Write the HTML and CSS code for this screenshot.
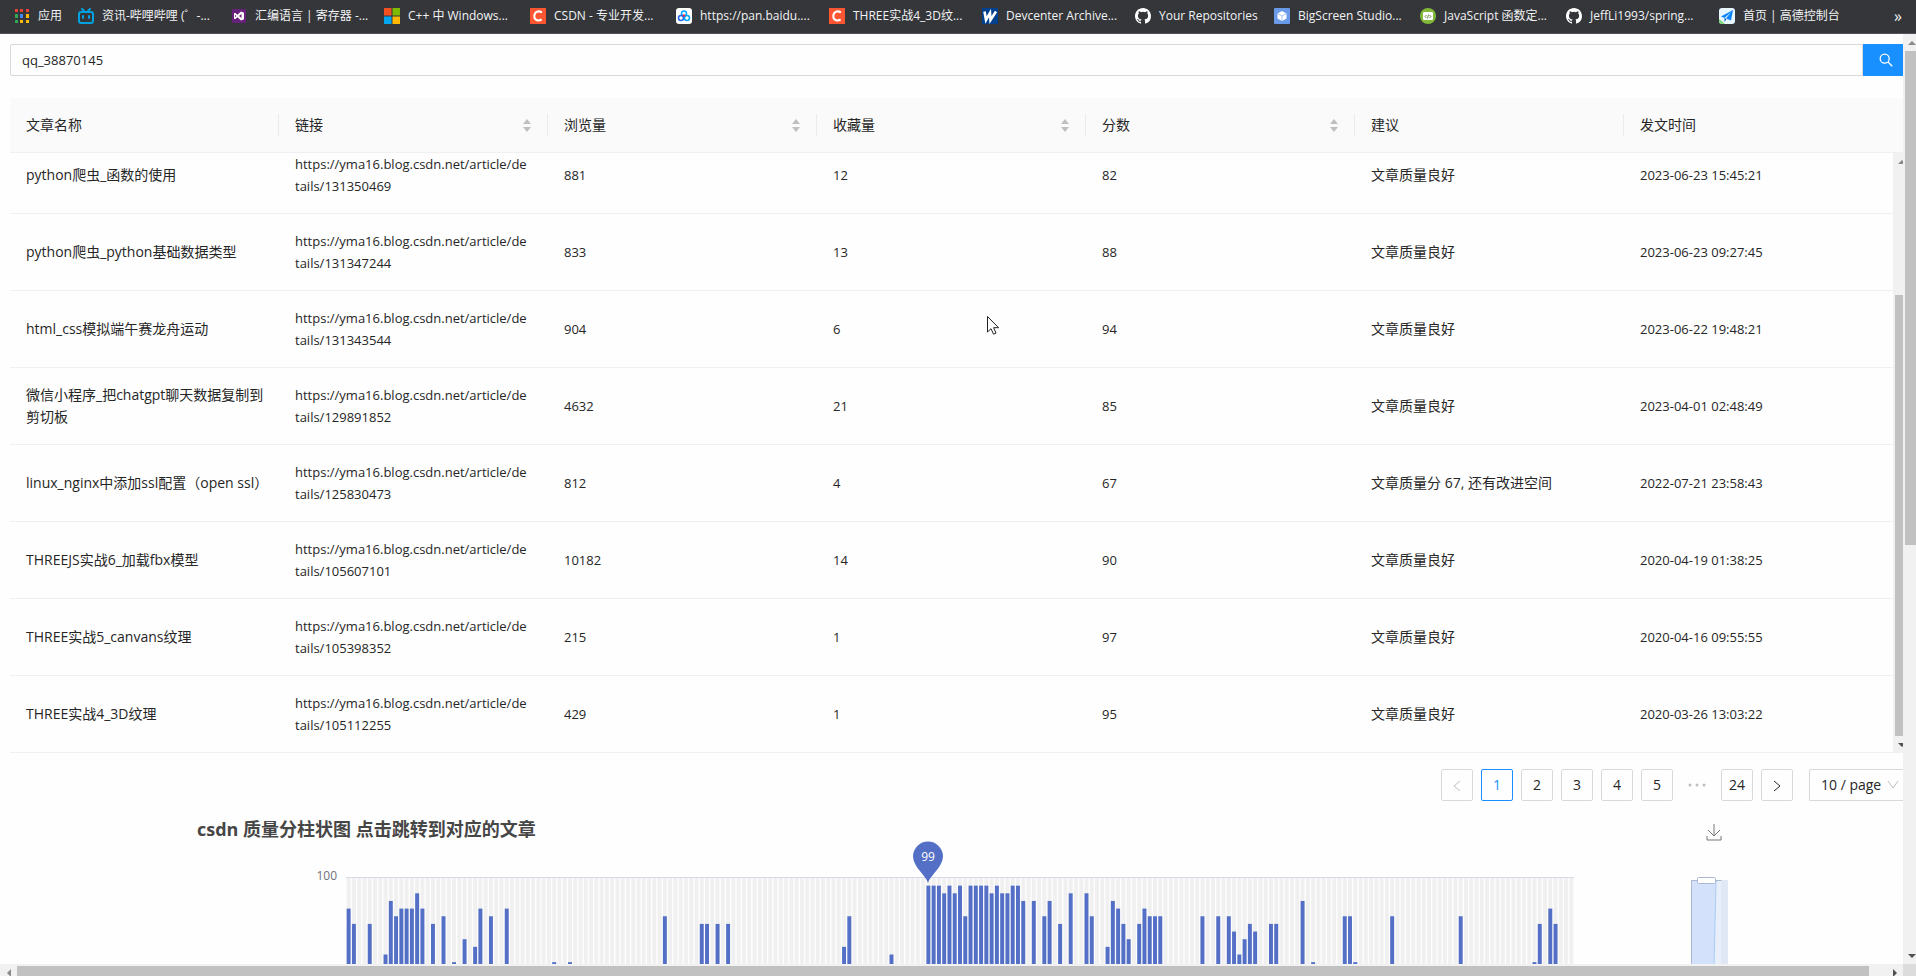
FILE: index.html
```html
<!DOCTYPE html>
<html lang="zh">
<head>
  <meta charset="UTF-8" />
  <meta name="viewport" content="width=device-width, initial-scale=1.0"/>
  <title>csdn 质量分</title>
  <link rel="stylesheet" href="styles.css">
</head>

<body>
  <!-- Bookmarks -->
  <nav class="bookmarks">
    <a href="#" class="bookmark apps">
      <svg width="16" height="16" viewBox="0 0 16 16"><g><path fill="#ea4335" d="M1 1h3v3H1zM6 1h3v3H6zM12 1h3v3h-3z"/><path fill="#34a853" d="M1 6h3v4H1zM1 12h3v3H1z"/><path fill="#4285f4" d="M6 6h3v4H6z"/><path fill="#fbbc05" d="M12 6h3v4h-3zM6 12h3v3H6zM12 12h3v3h-3z"/></g></svg>
      <span>应用</span>
    </a>
    <a href="#" class="bookmark">
      <svg width="16" height="16" viewBox="0 0 16 16" fill="none" stroke="#00a1e0" stroke-width="2" stroke-linecap="round"><rect x="1" y="4" width="14" height="11" rx="2"/><path d="M4 1l2 2M12 1l-2 2M5 8v2M11 8v2"/></svg>
      <span>资讯-哔哩哔哩 (゜-...</span>
    </a>
    <a href="#" class="bookmark">
      <svg width="16" height="16" viewBox="0 0 16 16"><rect x="1" y="1" width="14" height="14" rx="1" fill="#68217a"/><path d="M3 5.500v5l1 .7 2.500-2L10 12.500l3-1.200V4.700l-3-1.200-3.500 3.300-2.500-2z" fill="#fff"/><path d="M10.500 6v4L8 8zM4 6.800v2.400L5.300 8z" fill="#68217a"/></svg>
      <span>汇编语言 | 寄存器 -...</span>
    </a>
    <a href="#" class="bookmark narrow">
      <svg width="16" height="16" viewBox="0 0 16 16"><path fill="#f25022" d="M0 0h7.500v7.500H0z"/><path fill="#7fba00" d="M8.500 0H16v7.500H8.500z"/><path fill="#00a4ef" d="M0 8.500h7.500V16H0z"/><path fill="#ffb900" d="M8.500 8.500H16V16H8.500z"/></svg>
      <span>C++ 中 Windows...</span>
    </a>
    <a href="#" class="bookmark narrow">
      <svg width="16" height="16" viewBox="0 0 16 16"><rect width="16" height="16" fill="#fc5531"/><path d="M12 4.500C8 2 4.500 4 4.300 8S8 13.500 11.700 11.500" fill="none" stroke="#fff" stroke-width="2"/></svg>
      <span>CSDN - 专业开发...</span>
    </a>
    <a href="#" class="bookmark">
      <svg width="16" height="16" viewBox="0 0 16 16"><rect width="16" height="16" rx="3" fill="#fff"/><g fill="none" stroke-width="1.600"><circle cx="8" cy="5.500" r="2.500" stroke="#06a7ff"/><circle cx="5" cy="10" r="2.500" stroke="#2468f2"/><circle cx="11" cy="10" r="2.500" stroke="#06a7ff"/></g><circle cx="8" cy="7.500" r="1.200" fill="#f0304a"/></svg>
      <span>https://pan.baidu....</span>
    </a>
    <a href="#" class="bookmark">
      <svg width="16" height="16" viewBox="0 0 16 16"><rect width="16" height="16" fill="#fc5531"/><path d="M12 4.500C8 2 4.500 4 4.300 8S8 13.500 11.700 11.500" fill="none" stroke="#fff" stroke-width="2"/></svg>
      <span>THREE实战4_3D纹...</span>
    </a>
    <a href="#" class="bookmark">
      <svg width="16" height="16" viewBox="0 0 16 16"><rect width="16" height="16" fill="#01408c"/><path d="M2.500 3.500L4 12l4-7 .5 7L14 3.500" fill="none" stroke="#fff" stroke-width="2.600"/></svg>
      <span>Devcenter Archive...</span>
    </a>
    <a href="#" class="bookmark short">
      <svg width="16" height="16" viewBox="0 0 16 16"><path fill="#fff" d="M8 0C3.580 0 0 3.580 0 8c0 3.540 2.290 6.530 5.470 7.590.4.070.55-.17.55-.38v-1.490c-2.010.37-2.530-.49-2.690-.94-.09-.23-.48-.94-.82-1.130-.28-.15-.68-.52-.01-.53.63-.01 1.080.58 1.230.82.72 1.210 1.870.87 2.330.66.07-.52.28-.87.51-1.070-1.780-.2-3.640-.89-3.640-3.950 0-.87.310-1.590.82-2.150-.08-.2-.36-1.020.08-2.120 0 0 .67-.21 2.200.82a7.600 7.600 0 0 1 4 0c1.530-1.040 2.200-.82 2.200-.82.44 1.100.16 1.920.08 2.120.51.56.82 1.270.82 2.150 0 3.070-1.870 3.750-3.650 3.950.29.25.54.73.54 1.480v2.200c0 .21.150.46.55.38A8 8 0 0 0 16 8c0-4.420-3.580-8-8-8z"/></svg>
      <span>Your Repositories</span>
    </a>
    <a href="#" class="bookmark narrow">
      <svg width="16" height="16" viewBox="0 0 16 16"><rect width="16" height="16" rx="1" fill="#6a9be8"/><path d="M8 3l4.500 2.500v5L8 13l-4.500-2.500v-5z" fill="#fff"/><path d="M4 5.700l4 2.300 4-2.300M8 8v4.500" fill="none" stroke="#a9c6f3"/></svg>
      <span>BigScreen Studio...</span>
    </a>
    <a href="#" class="bookmark narrow">
      <svg width="16" height="16" viewBox="0 0 16 16"><circle cx="8" cy="8" r="8" fill="#82b83a"/><rect x="3" y="4" width="10" height="8" rx="1" fill="#fff"/><path d="M6.500 7L5 8.500 6.500 10M9.500 7L11 8.500 9.500 10M8.500 6.500l-1 4" fill="none" stroke="#6b8a4a"/></svg>
      <span>JavaScript 函数定...</span>
    </a>
    <a href="#" class="bookmark">
      <svg width="16" height="16" viewBox="0 0 16 16"><path fill="#fff" d="M8 0C3.580 0 0 3.580 0 8c0 3.540 2.290 6.530 5.470 7.590.4.070.55-.17.55-.38v-1.490c-2.010.37-2.530-.49-2.690-.94-.09-.23-.48-.94-.82-1.130-.28-.15-.68-.52-.01-.53.63-.01 1.080.58 1.230.82.72 1.210 1.870.87 2.330.66.07-.52.28-.87.51-1.070-1.780-.2-3.640-.89-3.640-3.950 0-.87.310-1.590.82-2.150-.08-.2-.36-1.020.08-2.120 0 0 .67-.21 2.200.82a7.600 7.600 0 0 1 4 0c1.530-1.040 2.200-.82 2.200-.82.44 1.100.16 1.920.08 2.120.51.56.82 1.270.82 2.150 0 3.070-1.870 3.750-3.650 3.950.29.25.54.73.54 1.480v2.200c0 .21.150.46.55.38A8 8 0 0 0 16 8c0-4.420-3.580-8-8-8z"/></svg>
      <span>JeffLi1993/spring...</span>
    </a>
    <a href="#" class="bookmark">
      <svg width="16" height="16" viewBox="0 0 16 16"><rect width="16" height="16" rx="3" fill="#e8f6ff"/><path d="M0 11l6 5H3a3 3 0 0 1-3-3z" fill="#7ed67a"/><path d="M14 2L2 8.500l3.500 1.500L12 4 7 10.500l5 2z" fill="#0b84ff"/><path d="M5.500 10v4L7.500 11z" fill="#0660c8"/></svg>
      <span>首页 | 高德控制台</span>
    </a>
    <button class="more" aria-label="More bookmarks">»</button>
  </nav>

  <div class="window">
    <main class="page">
      <form class="search">
        <input type="text" value="qq_38870145" aria-label="用户" />
        <button type="button" aria-label="搜索">
          <svg width="14" height="14" viewBox="0 0 14 14" fill="none" stroke="#fff" stroke-width="1.300"><circle cx="5.700" cy="5.700" r="4.500"/><path d="M9 9l4.300 4.300"/></svg>
        </button>
      </form>

      <!-- Articles -->
      <div class="table-wrap">
        <table class="head">
          <thead>
            <tr>
              <th><div>文章名称</div></th>
              <th><div>链接<i class="sorter"></i></div></th>
              <th><div>浏览量<i class="sorter"></i></div></th>
              <th><div>收藏量<i class="sorter"></i></div></th>
              <th><div>分数<i class="sorter"></i></div></th>
              <th><div>建议</div></th>
              <th><div>发文时间</div></th>
            </tr>
          </thead>
        </table>
        <div class="table-body">
          <div class="rows">
            <table>
              <tbody>
                <tr><td class="name">python爬虫_函数的使用</td><td class="link">https://yma16.blog.csdn.net/article/details/131350469</td><td>881</td><td>12</td><td>82</td><td class="advice">文章质量良好</td><td>2023-06-23 15:45:21</td></tr>
                <tr><td class="name">python爬虫_python基础数据类型</td><td class="link">https://yma16.blog.csdn.net/article/details/131347244</td><td>833</td><td>13</td><td>88</td><td class="advice">文章质量良好</td><td>2023-06-23 09:27:45</td></tr>
                <tr><td class="name">html_css模拟端午赛龙舟运动</td><td class="link">https://yma16.blog.csdn.net/article/details/131343544</td><td>904</td><td>6</td><td>94</td><td class="advice">文章质量良好</td><td>2023-06-22 19:48:21</td></tr>
                <tr><td class="name">微信小程序_把chatgpt聊天数据复制到剪切板</td><td class="link">https://yma16.blog.csdn.net/article/details/129891852</td><td>4632</td><td>21</td><td>85</td><td class="advice">文章质量良好</td><td>2023-04-01 02:48:49</td></tr>
                <tr><td class="name">linux_nginx中添加ssl配置（open ssl）</td><td class="link">https://yma16.blog.csdn.net/article/details/125830473</td><td>812</td><td>4</td><td>67</td><td class="advice">文章质量分 67, 还有改进空间</td><td>2022-07-21 23:58:43</td></tr>
                <tr><td class="name">THREEJS实战6_加载fbx模型</td><td class="link">https://yma16.blog.csdn.net/article/details/105607101</td><td>10182</td><td>14</td><td>90</td><td class="advice">文章质量良好</td><td>2020-04-19 01:38:25</td></tr>
                <tr><td class="name">THREE实战5_canvans纹理</td><td class="link">https://yma16.blog.csdn.net/article/details/105398352</td><td>215</td><td>1</td><td>97</td><td class="advice">文章质量良好</td><td>2020-04-16 09:55:55</td></tr>
                <tr><td class="name">THREE实战4_3D纹理</td><td class="link">https://yma16.blog.csdn.net/article/details/105112255</td><td>429</td><td>1</td><td>95</td><td class="advice">文章质量良好</td><td>2020-03-26 13:03:22</td></tr>
              </tbody>
            </table>
          </div>
          <div class="scroll-y inner">
            <span class="arrow up"></span>
            <span class="gap"></span>
            <span class="thumb"></span>
            <span class="arrow down"></span>
          </div>
        </div>
      </div>

      <!-- Pagination -->
      <div class="pagination">
        <button class="disabled" aria-label="Previous" disabled><svg width="12" height="12" viewBox="0 0 12 12"><path d="M9 1L3 6l6 5"/></svg></button>
        <button class="active">1</button>
        <button>2</button>
        <button>3</button>
        <button>4</button>
        <button>5</button>
        <span class="dots"><svg width="18" height="4" viewBox="0 0 18 4"><circle cx="2" cy="2" r="1.500"/><circle cx="9" cy="2" r="1.500"/><circle cx="16" cy="2" r="1.500"/></svg></span>
        <button>24</button>
        <button aria-label="Next"><svg width="12" height="12" viewBox="0 0 12 12"><path d="M3 1l6 5-6 5"/></svg></button>
        <div class="size">
          <select aria-label="Page size"><option>10 / page</option></select>
          <svg width="12" height="12" viewBox="0 0 12 12"><path d="M1 2l5 7 5-7"/></svg>
        </div>
      </div>

      <!-- Chart -->
      <section class="chart">
        <div class="chart-head">
          <h2>csdn 质量分柱状图 点击跳转到对应的文章</h2>
          <button class="save" aria-label="Save"><svg width="16" height="17" viewBox="0 0 16 17"><path d="M8 0v12M2 6l6 6 6-6M1 12v4h14v-4"/></svg></button>
        </div>
        <div class="chart-body">
          <span class="axis">100</span>
          <div class="plot">
            <svg id="bars" viewBox="0 0 1228 86" preserveAspectRatio="none"></svg>
            <div class="pin">
              <svg width="32" height="42" viewBox="0 0 32 42"><path fill="#5470c6" d="M16 42C14.500 35 1 26 1 15.500a15 15 0 0 1 30 0C31 26 17.500 35 16 42z"/></svg>
              <span>99</span>
            </div>
          </div>
          <svg class="zoom" width="37" height="90" viewBox="0 0 37 90">
            <path fill="#e0e7f5" d="M0 3h37v87H0z"/>
            <path fill="#d3e1fb" d="M0 3h25l-2 87H0z"/>
            <path fill="#e8effa" d="M25 3h5v87h-7z"/>
            <path fill="none" stroke="#acb8d1" d="M.5 90V3.500h30"/>
            <path fill="none" stroke="#a8ccf2" d="M25 4l-2 86"/>
            <rect x="6.500" y=".5" width="18" height="6" rx="1" fill="#fff" stroke="#acb8d1"/>
          </svg>
        </div>
      </section>
    </main>

    <div class="scroll-y outer">
      <span class="arrow up"></span>
      <span class="thumb"></span>
      <span class="gap"></span>
      <span class="arrow down"></span>
    </div>
    <div class="scroll-x">
      <span class="arrow left"></span>
      <span class="thumb"></span>
      <span class="arrow right"></span>
    </div>
    <div class="corner"></div>
  </div>

  <svg class="cursor" width="12" height="19" viewBox="0 0 12 19"><path d="M.5 .5v15.500l3.500-3.300 2.500 5.500 2.500-1.100-2.400-5.400h5z" fill="#fff" stroke="#222"/></svg>

  <script src="script.js"></script>
</body>
</html>
```
FILE: styles.css
```css
* {
  margin: 0;
  padding: 0;
  box-sizing: border-box;
}

body {
  height: 100vh;
  overflow: hidden;
  display: flex;
  flex-direction: column;
  font-family: 'Open Sans', 'Noto Sans CJK SC', sans-serif;
  font-size: 13px;
  line-height: 22px;
  color: #262626;
  background-color: #fefefe;
}

button, input, select {
  font: inherit;
  color: inherit;
}

/* bookmarks */
.bookmarks {
  display: flex;
  align-items: center;
  height: 34px;
  flex-shrink: 0;
  padding: 0 14px 2px;
  background-color: #35363a;
  border-bottom: 1px solid #5a5058;
  overflow: hidden;
}

.bookmark {
  display: flex;
  align-items: center;
  gap: 8px;
  width: 153px;
  flex-shrink: 0;
  color: #f1f3f4;
  font-size: 12px;
  line-height: 16px;
  white-space: nowrap;
  text-decoration: none;
}

.bookmark svg {
  flex-shrink: 0;
}

.apps {
  width: 64px;
}

.narrow {
  width: 146px;
}

.short {
  width: 139px;
}

.more {
  margin-left: auto;
  border: none;
  background: none;
  color: #f1f3f4;
  font-size: 16px;
}

/* window with its scrollbars */
.window {
  flex: 1;
  min-height: 0;
  display: grid;
  grid-template-columns: minmax(0, 1fr) 13px;
  grid-template-rows: minmax(0, 1fr) 12px;
}

.page {
  overflow: hidden;
  padding: 10px 0 0 10px;
}

.search {
  display: flex;
  height: 32px;
}

.search input {
  flex: 1;
  border: 1px solid #d9d9d9;
  border-radius: 2px 0 0 2px;
  padding: 0 11px;
  background: none;
  outline: none;
}

.search button {
  width: 40px;
  padding-left: 6px;
  border: none;
  background-color: #1890ff;
}

.search svg {
  display: block;
  margin: 0 auto;
}

/* table */
.table-wrap {
  margin-top: 22px;
}

table {
  width: 100%;
  table-layout: fixed;
  border-collapse: separate;
  border-spacing: 0;
}

.head {
  padding-right: 10px;
  background-color: #fafafa;
  border-bottom: 1px solid #f0f0f0;
}

th {
  padding: 16px 0;
  font-size: 14px;
  font-weight: 400;
  text-align: left;
}

th div {
  display: flex;
  align-items: center;
  justify-content: space-between;
  padding: 0 16px;
  border-right: 1px solid #ebebeb;
}

th:last-child div {
  border-right: none;
}

.sorter {
  display: flex;
  flex-direction: column;
  gap: 3px;
}

.sorter::before,
.sorter::after {
  content: "";
  border: 4px solid transparent;
}

.sorter::before {
  border-top: none;
  border-bottom: 5px solid #bfbfbf;
}

.sorter::after {
  border-bottom: none;
  border-top: 5px solid #bfbfbf;
}

.table-body {
  display: flex;
  height: 600px;
}

.rows {
  flex: 1;
  display: flex;
  align-items: flex-end;
  overflow: hidden;
}

td {
  height: 77px;
  padding: 0 16px;
  border-bottom: 1px solid #f0f0f0;
  word-break: break-all;
  vertical-align: middle;
}

.name,
.advice {
  font-size: 14px;
}

.name {
  padding-right: 12px;
}

.link {
  padding-right: 20px;
}

/* pagination */
.pagination {
  display: flex;
  justify-content: flex-end;
  gap: 8px;
  margin: 16px 0;
  font-size: 14px;
}

.pagination button,
.dots {
  width: 32px;
  height: 32px;
  flex-shrink: 0;
  line-height: 30px;
  text-align: center;
}

.pagination button {
  border: 1px solid #d9d9d9;
  border-radius: 2px;
  background: none;
}

.pagination .active {
  border-color: #1890ff;
  color: #1890ff;
}

.pagination svg {
  fill: none;
  stroke: #262626;
  vertical-align: middle;
}

.pagination .disabled svg,
.pagination .size svg {
  stroke: #bfbfbf;
}

.pagination .dots svg {
  fill: #bfbfbf;
  stroke: none;
}

.size {
  display: flex;
  align-items: center;
  width: 94px;
  height: 32px;
  margin-left: 8px;
  padding: 0 4px 0 11px;
  border: 1px solid #d9d9d9;
  border-right: none;
  border-radius: 2px 0 0 2px;
}

.size select {
  flex: 1;
  min-width: 0;
  appearance: none;
  border: none;
  background: none;
}

/* chart */
.chart {
  padding: 0 175px 0 187px;
}

.chart-head {
  display: flex;
  justify-content: space-between;
  height: 44px;
}

.chart h2 {
  font-size: 18px;
  line-height: 24px;
  color: #464646;
}

.save {
  display: flex;
  width: 22px;
  height: 17px;
  margin-top: 7px;
  border: none;
  background: none;
}

.save svg {
  fill: none;
  stroke: #777;
}

.chart-body {
  display: flex;
}

.axis {
  width: 149px;
  padding-right: 9px;
  margin-top: 4px;
  font-size: 12px;
  text-align: right;
  color: #6e7079;
}

.plot {
  position: relative;
  flex: 1;
  height: 88px;
  margin-top: 16px;
  border-top: 1px solid #d5dae6;
}

.plot > svg {
  display: block;
  width: 100%;
  height: 86px;
}

/* marks the highest score */
.pin {
  position: absolute;
  left: calc(47.4% - 16px);
  bottom: 82px;
  width: 32px;
  height: 42px;
}

.pin span {
  position: absolute;
  top: 5px;
  left: 0;
  width: 100%;
  font-size: 12px;
  text-align: center;
  color: #fff;
}

.zoom {
  flex-shrink: 0;
  margin: 16px 0 0 117px;
}

/* scrollbars */
.scroll-y,
.scroll-x {
  display: flex;
  align-items: flex-start;
  overflow: hidden;
  background-color: #f1f1f1;
}

.scroll-y {
  flex-direction: column;
}

.thumb {
  background-color: #c1c1c1;
}

.scroll-y .thumb {
  width: 100%;
  border-left: 2px solid #f1f1f1;
}

.inner {
  width: 10px;
}

.inner .gap {
  height: 125px;
}

.inner .thumb {
  flex: 1;
}

.outer .thumb {
  height: 494px;
}

.outer .gap {
  flex: 1;
}

.scroll-x .thumb {
  flex: 1;
  align-self: stretch;
  border-top: 2px solid #f1f1f1;
}

.scroll-x .right {
  margin-left: 17px;
}

.arrow {
  width: 17px;
  height: 17px;
  flex-shrink: 0;
  display: flex;
  align-items: center;
  justify-content: center;
}

.arrow::before {
  content: "";
  border: 4px solid transparent;
}

.up::before {
  border-top: none;
  border-bottom-color: #8a8a8a;
}

.down::before {
  border-bottom: none;
  border-top-color: #505050;
}

.left::before {
  border-left: none;
  border-right-color: #8a8a8a;
}

.right::before {
  border-right: none;
  border-left-color: #505050;
}

.corner {
  background-color: #dcdcdc;
}

.cursor {
  position: absolute;
  left: 987px;
  top: 316px;
}
```
FILE: script.js
```js
// article index -> score, only scores above the visible bottom of the plot
const scores = {
  0: 96, 1: 94, 4: 94, 7: 90, 8: 97, 9: 95, 10: 96, 11: 96, 12: 96, 13: 98, 14: 96,
  16: 94, 18: 95, 20: 89, 22: 92, 24: 91, 25: 96, 27: 95, 30: 96, 39: 89, 42: 89,
  60: 95, 67: 94, 68: 94, 70: 94, 72: 94, 94: 91, 95: 95, 103: 90,
  110: 99, 111: 99, 112: 99, 113: 98, 114: 99, 115: 98, 116: 99, 117: 95, 118: 99,
  119: 99, 120: 99, 121: 99, 122: 98, 123: 99, 124: 98, 125: 98, 126: 99, 127: 99,
  128: 97, 130: 97, 132: 95, 133: 97, 135: 94, 137: 98, 140: 98, 141: 95,
  144: 91, 145: 97, 146: 96, 147: 94, 148: 92, 150: 94, 151: 96, 152: 95, 153: 95, 154: 95,
  162: 95, 165: 95, 167: 95, 168: 93, 169: 90, 170: 92, 171: 94, 172: 93, 175: 94, 176: 94,
  181: 97, 183: 89, 189: 95, 190: 95, 191: 89, 198: 95, 211: 95,
  225: 89, 226: 94, 228: 96, 229: 94
};

const total = 233;
const width = 1228;
const height = 86;
const unit = 7.65;
const step = width / total;
const barWidth = step * 0.75;

let html = "";
for (let i = 0; i < total; i++) {
  const x = i * step + (step - barWidth) / 2;
  html += `<rect x="${x}" y="0" width="${barWidth}" height="${height}" fill="#f0f0f0"/>`;
  if (scores[i]) {
    const y = (100 - scores[i]) * unit;
    html += `<rect x="${x}" y="${y}" width="${barWidth}" height="${height - y}" fill="#5470c6"/>`;
  }
}
document.getElementById("bars").innerHTML = html;
```
